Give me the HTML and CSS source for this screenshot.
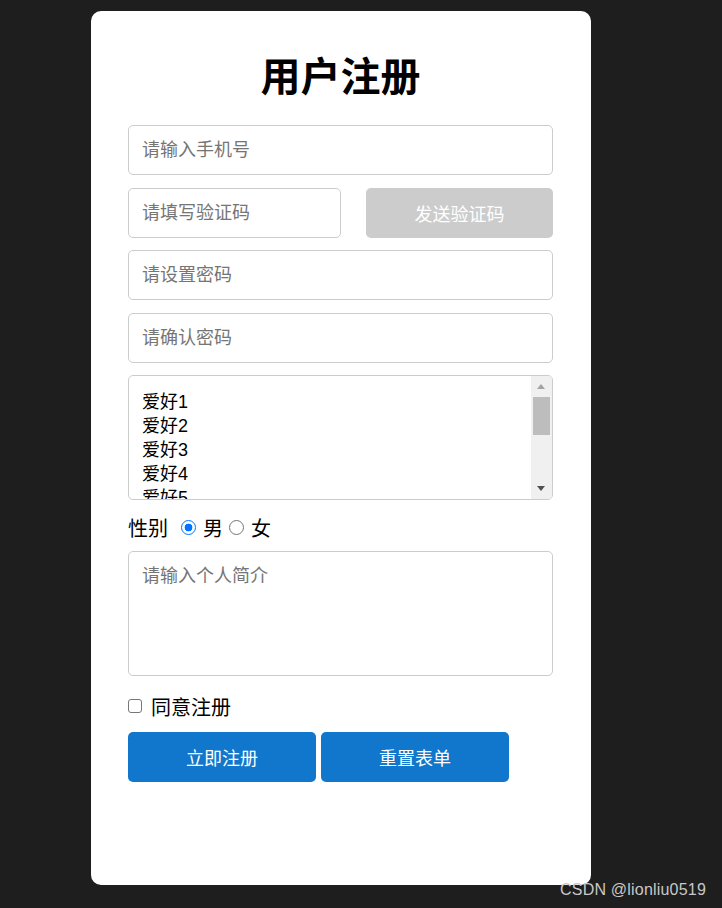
FILE: index.html
```html
<!DOCTYPE html>
<html lang="zh-CN">
<head>
<meta charset="utf-8">
<title>用户注册</title>
<link rel="stylesheet" href="styles.css">
</head>
<body>
<div class="card">
  <h1 class="title">用户注册</h1>
  <form class="form">
    <input class="field" type="text" placeholder="请输入手机号">
    <div class="code-row">
      <input class="field code-field" type="text" placeholder="请填写验证码">
      <button class="send-btn" type="button" disabled>发送验证码</button>
    </div>
    <input class="field" type="password" placeholder="请设置密码">
    <input class="field field-last" type="password" placeholder="请确认密码">
    <div class="hobbies" role="listbox" aria-multiselectable="true">
      <div class="hobby-list">
        <div class="hobby" role="option">爱好1</div>
        <div class="hobby" role="option">爱好2</div>
        <div class="hobby" role="option">爱好3</div>
        <div class="hobby" role="option">爱好4</div>
        <div class="hobby" role="option">爱好5</div>
      </div>
      <div class="scrollbar">
        <span class="arrow arrow-up"></span>
        <span class="thumb"></span>
        <span class="arrow arrow-down"></span>
      </div>
    </div>
    <div class="gender-row">
      <span class="label">性别</span>
      <input class="radio" type="radio" name="sex" id="male" checked>
      <label for="male">男</label>
      <input class="radio" type="radio" name="sex" id="female">
      <label for="female">女</label>
    </div>
    <textarea class="intro" placeholder="请输入个人简介"></textarea>
    <div class="agree-row">
      <input class="check" type="checkbox" id="agree">
      <label for="agree">同意注册</label>
    </div>
    <div class="btn-row">
      <button class="btn" type="button">立即注册</button>
      <button class="btn" type="reset">重置表单</button>
    </div>
  </form>
</div>
<div class="watermark">CSDN @lionliu0519</div>
</body>
</html>
```

FILE: styles.css
```css
html, body {
  margin: 0;
  padding: 0;
}
body {
  background: #1e1e1e;
  font-family: "Liberation Sans", "Noto Sans CJK SC", sans-serif;
  padding: 11px 0 0 91px;
  height: 908px;
  box-sizing: border-box;
  overflow: hidden;
}
.card {
  width: 500px;
  height: 874px;
  box-sizing: border-box;
  background: #fff;
  border-radius: 10px;
  padding: 38px 38px 0 37px;
}
.title {
  margin: 0 0 20px;
  text-align: center;
  font-size: 40px;
  line-height: 56px;
  font-weight: bold;
  color: #000;
}
.form {
  display: flex;
  flex-direction: column;
}
.field {
  display: block;
  width: 425px;
  height: 50px;
  box-sizing: border-box;
  border: 1px solid #cccccc;
  border-radius: 5px;
  padding: 0 13px;
  font-family: inherit;
  font-size: 18px;
  color: #000;
  outline: none;
  margin: 0 0 13px;
}
.field-last {
  margin-bottom: 12px;
}
.field::placeholder,
.intro::placeholder {
  color: #757575;
}
.code-row {
  display: flex;
  gap: 25px;
  margin: 0 0 12px;
}
.code-field {
  width: 213px;
  margin: 0;
}
.send-btn {
  width: 187px;
  height: 50px;
  border: none;
  border-radius: 5px;
  background: #cccccc;
  color: #fff;
  font-family: inherit;
  font-size: 18px;
}
.hobbies {
  position: relative;
  width: 425px;
  height: 125px;
  box-sizing: border-box;
  border: 1px solid #cccccc;
  border-radius: 5px;
  overflow: hidden;
  background: #fff;
}
.hobby-list {
  padding: 14px 0 0 13px;
  font-size: 18px;
  color: #000;
}
.hobby {
  line-height: 24px;
  height: 24px;
}
.scrollbar {
  position: absolute;
  top: 0;
  right: 0;
  bottom: 0;
  width: 21px;
  background: #f0f0f0;
}
.thumb {
  position: absolute;
  left: 2px;
  right: 2px;
  top: 21px;
  height: 38px;
  background: #bdbdbd;
}
.arrow {
  position: absolute;
  left: 6px;
  width: 0;
  height: 0;
  border-left: 4.5px solid transparent;
  border-right: 4.5px solid transparent;
}
.arrow-up {
  top: 8px;
  border-bottom: 5px solid #a3a3a3;
}
.arrow-down {
  bottom: 8px;
  border-top: 5px solid #505050;
}
.gender-row {
  display: flex;
  align-items: center;
  height: 30px;
  margin: 12px 0 9px;
  font-size: 20px;
  color: #000;
}
.radio {
  appearance: none;
  -webkit-appearance: none;
  box-sizing: border-box;
  width: 15px;
  height: 15px;
  border: 1.5px solid #767676;
  border-radius: 50%;
  background: #fff;
  margin: 0 7px 0 13px;
}
.radio:checked {
  border-color: #0075ff;
  background: radial-gradient(circle, #0075ff 0 3.6px, #fff 4.2px);
}
.radio + label + .radio {
  margin-left: 6px;
}
.intro {
  display: block;
  width: 425px;
  height: 125px;
  box-sizing: border-box;
  border: 1px solid #cccccc;
  border-radius: 5px;
  padding: 12px 13px;
  font-family: inherit;
  font-size: 18px;
  line-height: 24px;
  resize: none;
  outline: none;
  margin: 0;
}
.agree-row {
  display: flex;
  align-items: center;
  height: 26px;
  margin: 17px 0 13px;
  font-size: 20px;
  color: #000;
}
.check {
  appearance: none;
  -webkit-appearance: none;
  box-sizing: border-box;
  width: 14px;
  height: 14px;
  border: 1.5px solid #767676;
  border-radius: 3px;
  background: #fff;
  margin: 0 9px 0 0;
}
.btn-row {
  display: flex;
  gap: 5px;
}
.btn {
  width: 188px;
  height: 50px;
  border: none;
  border-radius: 5px;
  background: #1177cc;
  color: #fff;
  font-family: inherit;
  font-size: 18px;
}
.watermark {
  position: absolute;
  right: 16px;
  top: 881px;
  font-size: 16px;
  letter-spacing: 0.2px;
  color: #c8c8c8;
  font-family: "Liberation Sans", sans-serif;
}
```
